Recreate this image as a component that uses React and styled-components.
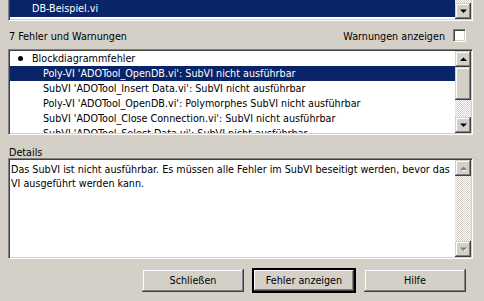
import React from "react"
import styled, { createGlobalStyle, css } from "styled-components"

const GlobalStyle = createGlobalStyle`
  html, body {
    margin: 0;
    padding: 0;
    background: #d4d0c8;
  }
  body {
    font-family: "DejaVu Sans Condensed", "DejaVu Sans", Verdana, sans-serif;
    font-stretch: condensed;
    font-size: 10.7px;
    color: #000;
  }
`

const sunken = css`
  border-style: solid;
  border-width: 1px;
  border-color: #808080 #ffffff #ffffff #808080;
  box-shadow: inset 1px 1px #404040, inset -1px -1px #d4d0c8;
`

const raised = css`
  background: #d4d0c8;
  box-shadow: inset -1px -1px #404040, inset 1px 1px #d4d0c8,
    inset -2px -2px #808080, inset 2px 2px #ffffff;
`

const Dialog = styled.div`
  width: 484px;
  height: 301px;
  padding: 0 11px 0 8px;
  box-sizing: border-box;
  display: flex;
  flex-direction: column;
  overflow: hidden;
`

const ListBox = styled.div`
  ${sunken};
  background: #fff;
  box-sizing: border-box;
  height: ${p => p.$height}px;
  flex: none;
  display: flex;
  padding: 1px;
  overflow: hidden;
  ${p => p.$cutTop && css`
    border-top: none;
    padding-top: 0;
    box-shadow: inset 1px 0 #404040, inset -1px -1px #d4d0c8;
  `}
`

const Rows = styled.div`
  flex: 1;
  min-width: 0;
  overflow: hidden;
`

const Row = styled.div`
  height: ${p => p.$height || 15}px;
  line-height: 15px;
  padding-left: ${p => p.$indent}px;
  white-space: nowrap;
  display: flex;
  align-items: center;
  background: ${p => (p.$selected ? "#0a246a" : "transparent")};
  color: ${p => (p.$selected ? "#fff" : "#000")};
`

const Bullet = styled.span`
  width: 5px;
  height: 5px;
  border-radius: 50%;
  background: #000;
  margin: 0 9px 0 -14px;
`

const ScrollBar = styled.div`
  width: 16px;
  flex: none;
  display: flex;
  flex-direction: column;
  background: repeating-conic-gradient(#d4d0c8 0 25%, #ffffff 0 50%) 0 0 / 2px 2px;
`

const ScrollButton = styled.div`
  ${raised};
  height: 16px;
  flex: none;
  display: flex;
  align-items: center;
  justify-content: center;
`

const Thumb = styled.div`
  ${raised};
  height: ${p => p.$height}px;
  flex: none;
`

const Track = styled.div`
  flex: 1;
`

const Arrow = ({ up, disabled }) => (
  <svg width="7" height="5" viewBox="0 0 7 5">
    {disabled && (
      <polygon
        points={up ? "1,5 4,2 7,5" : "1,1 4,4 7,1"}
        fill="#ffffff"
        transform="translate(0.5 0.5)"
      />
    )}
    <polygon
      points={up ? "0,4 3.5,0.5 7,4" : "0,0.5 3.5,4 7,0.5"}
      fill={disabled ? "#808080" : "#000"}
    />
  </svg>
)

const HeaderRow = styled.div`
  height: 28px;
  flex: none;
  display: flex;
  align-items: center;
  justify-content: space-between;
  padding: 2px 0 0 1px;
  box-sizing: border-box;
`

const CheckLabel = styled.label`
  display: flex;
  align-items: center;
  gap: 8px;
  margin-right: 7px;
`

const CheckBox = styled.span`
  ${sunken};
  width: 13px;
  height: 13px;
  box-sizing: border-box;
  background: #fff;
  margin-top: -2px;
`

const SectionLabel = styled.div`
  height: 23px;
  flex: none;
  display: flex;
  align-items: flex-end;
  padding: 0 0 0 1px;
  line-height: 10px;
  box-sizing: border-box;
`

const DetailsText = styled.div`
  flex: 1;
  padding: 3px 2px 0 1px;
  line-height: 14px;
  white-space: nowrap;
  overflow: hidden;
`

const ButtonRow = styled.div`
  display: flex;
  justify-content: flex-end;
  gap: 9px;
  padding: 10px 7px 0 0;
`

const Button = styled.button`
  ${raised};
  width: 102px;
  height: 23px;
  border: none;
  padding: 0;
  font: inherit;
  color: #000;
  ${p => p.$default && css`
    outline: 1px solid #000;
    outline-offset: 0;
    box-shadow: inset 0 0 0 1px #000, inset -2px -2px #404040,
      inset 2px 2px #ffffff, inset -3px -3px #808080;
  `}
`

const items = [
  { text: "Poly-VI 'ADOTool_OpenDB.vi': SubVI nicht ausführbar", selected: true },
  { text: "SubVI 'ADOTool_Insert Data.vi': SubVI nicht ausführbar" },
  { text: "Poly-VI 'ADOTool_OpenDB.vi': Polymorphes SubVI nicht ausführbar" },
  { text: "SubVI 'ADOTool_Close Connection.vi': SubVI nicht ausführbar" },
  { text: "SubVI 'ADOTool_Select Data.vi': SubVI nicht ausführbar" },
]

export default function App() {
  return (
    <>
      <GlobalStyle />
      <Dialog>
        <ListBox $height={21} $cutTop>
          <Rows>
            <Row $indent={22} $selected $height={17}>DB-Beispiel.vi</Row>
            <Row $indent={22}>Datenbank.vi</Row>
          </Rows>
          <ScrollBar>
            <Track />
            <ScrollButton><Arrow /></ScrollButton>
          </ScrollBar>
        </ListBox>

        <HeaderRow>
          <span>7 Fehler und Warnungen</span>
          <CheckLabel>
            Warnungen anzeigen
            <CheckBox />
          </CheckLabel>
        </HeaderRow>

        <ListBox $height={86}>
          <Rows>
            <Row $indent={22}>
              <Bullet />
              Blockdiagrammfehler
            </Row>
            {items.map(item => (
              <Row key={item.text} $indent={33} $selected={item.selected}>
                {item.text}
              </Row>
            ))}
          </Rows>
          <ScrollBar>
            <ScrollButton><Arrow up /></ScrollButton>
            <Thumb $height={33} />
            <Track />
            <ScrollButton><Arrow /></ScrollButton>
          </ScrollBar>
        </ListBox>

        <SectionLabel>Details</SectionLabel>

        <ListBox $height={101}>
          <DetailsText>
            Das SubVI ist nicht ausführbar. Es müssen alle Fehler im SubVI beseitigt werden, bevor das
            <br />
            VI ausgeführt werden kann.
          </DetailsText>
          <ScrollBar>
            <ScrollButton><Arrow up disabled /></ScrollButton>
            <Track />
            <ScrollButton><Arrow disabled /></ScrollButton>
          </ScrollBar>
        </ListBox>

        <ButtonRow>
          <Button>Schließen</Button>
          <Button $default>Fehler anzeigen</Button>
          <Button>Hilfe</Button>
        </ButtonRow>
      </Dialog>
    </>
  )
}
